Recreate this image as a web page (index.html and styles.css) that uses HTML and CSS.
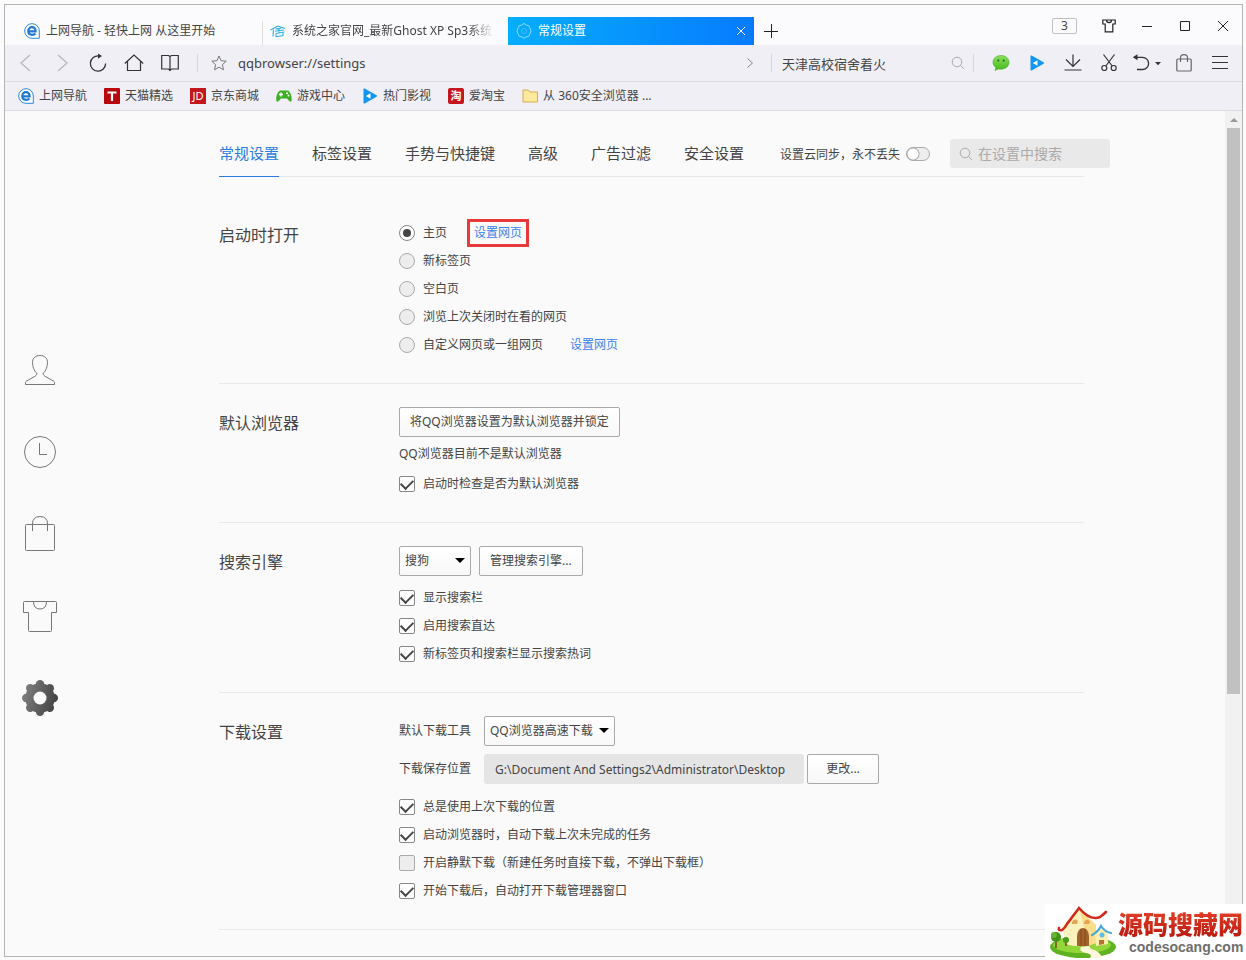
FILE: index.html
```html
<!DOCTYPE html>
<html lang="zh-CN">
<head>
<meta charset="utf-8">
<title>常规设置</title>
<link rel="stylesheet" href="styles.css">
</head>
<body>
<svg class="defs" width="0" height="0" aria-hidden="true">
  <defs>
    <linearGradient id="gearFill" gradientUnits="userSpaceOnUse" x1="0" y1="12" x2="36" y2="24"><stop offset="0" stop-color="#808080"/><stop offset="1" stop-color="#404040"/></linearGradient>
    <linearGradient id="chatFill" x1="0" y1="0" x2="0" y2="1"><stop offset="0" stop-color="#8be05e"/><stop offset="1" stop-color="#43b91c"/></linearGradient>
    <symbol id="i-e" viewBox="0 0 16 16"><path d="M15.300 15.300H8A7.300 7.300 0 1 1 15.300 8Z" fill="#fff" stroke="#2b86de" stroke-width="1"/><path d="M4.400 8.300H11.600C11.700 5.700 10.100 4.200 8 4.200S4.300 5.900 4.300 8.100 5.900 11.900 8.200 11.900C9.600 11.900 10.600 11.500 11.400 10.600" fill="none" stroke="#1f78d4" stroke-width="2.200"/></symbol>
    <symbol id="i-play" viewBox="0 0 16 16"><path d="M1.500 1.200Q1.500 0 2.700 .6L14.600 7.200Q15.700 8 14.600 8.800L2.700 15.400Q1.500 16 1.500 14.800Z" fill="#1296f5"/><path d="M8.500 5.200V10.800L3.800 8Z" fill="#fff"/></symbol>
    <symbol id="i-search" viewBox="0 0 14 14"><circle cx="6" cy="6" r="4.800" fill="none" stroke="currentColor"/><path d="M9.500 9.500L13 13" stroke="currentColor"/></symbol>
  </defs>
</svg>
<div class="window">
  <header class="titlebar">
    <div class="tabs">
      <div class="tab"><svg class="ico" viewBox="0 0 16 16"><use href="#i-e"/></svg><span class="tab-text">上网导航 - 轻快上网 从这里开始</span></div>
      <div class="tab tab-divided"><svg class="ico" viewBox="0 0 16 16" fill="none" stroke="#2fb0ea" stroke-width="1.100"><path d="M.5 7L8 3L15 5.500M3.500 6.500L3 13.500M5 8.200L14 7M5.500 6L11.500 5M6 10.500L14.500 9M9 5V10M6 13.800L13 12.500V10M6 10.500V13.800"/></svg><span class="tab-text tab-fade">系统之家官网_最新Ghost XP Sp3系统</span></div>
      <div class="tab tab-active"><svg class="ico" viewBox="0 0 16 16" fill="none" stroke="#8fdcff"><path d="M8 .7Q9.300 .7 10.200 2.200Q13.300 1.700 13.600 4.500Q16.600 8 13.600 11.500Q13.300 14.300 10.200 13.800Q8 16.600 5.800 13.800Q2.700 14.300 2.400 11.500Q-.6 8 2.400 4.500Q2.700 1.700 5.800 2.200Q6.700 .7 8 .7Z"/><circle cx="8" cy="8" r="2.600" stroke="#48b8ff"/></svg><span class="tab-text">常规设置</span><button class="tab-close" aria-label="关闭标签"><svg width="10" height="10" viewBox="0 0 10 10" stroke="#fff"><path d="M1 1L9 9M9 1L1 9"/></svg></button></div>
      <button class="tab-new" aria-label="新标签"><svg width="14" height="14" viewBox="0 0 14 14" stroke="#222"><path d="M0 7.500H14M7.500 0V14"/></svg></button>
    </div>
    <div class="controls">
      <button class="count">3</button>
      <button class="ctl" aria-label="皮肤"><svg width="14" height="14" viewBox="0 0 14 14" fill="none" stroke="#222" stroke-width="1.200"><path d="M.8 1H13.200V5H10.800V12.800H3.200V5H.8ZM4.500 1Q4.500 3.600 7 3.600T9.500 1"/></svg></button>
      <button class="ctl" aria-label="最小化"><svg width="12" height="12" viewBox="0 0 12 12" stroke="#222"><path d="M1 6.500H11"/></svg></button>
      <button class="ctl" aria-label="最大化"><svg width="12" height="12" viewBox="0 0 12 12" fill="none" stroke="#222"><path d="M1.500 1.500H10.500V10.500H1.500Z"/></svg></button>
      <button class="ctl" aria-label="关闭"><svg width="12" height="12" viewBox="0 0 12 12" stroke="#222"><path d="M1 1L11 11M11 1L1 11"/></svg></button>
    </div>
  </header>

  <div class="toolbar">
    <button class="tool" aria-label="后退"><svg width="18" height="18" viewBox="0 0 18 18" fill="none" stroke="#b5b5bb" stroke-width="1.200"><path d="M13 1L4 9L13 17"/></svg></button>
    <button class="tool" aria-label="前进"><svg width="18" height="18" viewBox="0 0 18 18" fill="none" stroke="#b5b5bb" stroke-width="1.200"><path d="M5 1L14 9L5 17"/></svg></button>
    <button class="tool" aria-label="刷新"><svg width="18" height="18" viewBox="0 0 18 18" fill="none" stroke="#333" stroke-width="1.300"><path d="M10 2A7.600 7.600 0 1 0 16.600 9.500"/><path d="M9 -.5L13 2L9 4.700Z" fill="#333" stroke="none"/></svg></button>
    <button class="tool" aria-label="主页"><svg width="20" height="18" viewBox="0 0 20 18" fill="none" stroke="#333" stroke-width="1.200"><path d="M.8 9.500L10 1L19.200 9.500M3.500 7.200V16.500H16.500V7.200"/></svg></button>
    <button class="tool" aria-label="阅读"><svg width="18" height="18" viewBox="0 0 18 18" fill="none" stroke="#333" stroke-width="1.200"><path d="M.7 1.500H7.500L9 2.500L10.500 1.500H17.300V15H10.500L9 16.500L7.500 15H.7ZM9 2.500V16.500"/></svg></button>
    <div class="address">
      <svg width="16" height="16" viewBox="0 0 16 16" fill="none" stroke="#777"><path d="M8 1L10.100 5.700L15.200 6.200L11.400 9.700L12.500 14.800L8 12.200L3.500 14.800L4.600 9.700L.8 6.200L5.900 5.700Z"/></svg>
      <input class="url" aria-label="地址" value="qqbrowser://settings">
      <svg width="8" height="12" viewBox="0 0 8 12" fill="none" stroke="#888"><path d="M1.500 1.500L6.500 6L1.500 10.500"/></svg>
    </div>
    <div class="quick">
      <input class="quick-input" aria-label="搜索" value="天津高校宿舍着火">
      <svg class="grey" width="14" height="14"><use href="#i-search"/></svg>
    </div>
    <div class="tools">
      <button class="tool" aria-label="微信"><svg width="18" height="18" viewBox="0 0 18 18"><path d="M9 1.500C4.300 1.500 1 4.500 1 8.300C1 10.600 2.200 12.500 4 13.700L3 16.500L6.500 14.900Q7.700 15.200 9 15.200C13.700 15.200 17 12.200 17 8.300S13.700 1.500 9 1.500Z" fill="url(#chatFill)" stroke="#4aa82a" stroke-width=".6"/><circle cx="6.300" cy="6.500" r="1" fill="#245e12"/><circle cx="11.700" cy="6.500" r="1" fill="#245e12"/></svg></button>
      <button class="tool" aria-label="视频"><svg width="16" height="16"><use href="#i-play"/></svg></button>
      <button class="tool" aria-label="下载"><svg width="18" height="18" viewBox="0 0 18 18" fill="none" stroke="#333" stroke-width="1.200"><path d="M9 .5V12M2 5.500L9 12.500L16 5.500M.5 16H17.500"/></svg></button>
      <button class="tool" aria-label="截图"><svg width="18" height="18" viewBox="0 0 18 18" fill="none" stroke="#333" stroke-width="1.200"><path d="M3.500 .5L12.200 12M14.500 .5L5.800 12"/><circle cx="4.300" cy="14" r="2.500"/><circle cx="13.700" cy="14" r="2.500"/></svg></button>
      <button class="tool tool-wide" aria-label="恢复"><svg width="28" height="18" viewBox="0 0 28 18" fill="none" stroke="#333" stroke-width="1.300"><path d="M1 3.300H9.500A6 6 0 0 1 9.500 15.500H4"/><path d="M-.2 3.300L4.500 .2V6.200Z" fill="#333" stroke="none"/><path d="M22 8H28L25 11.200Z" fill="#333" stroke="none"/></svg></button>
      <button class="tool" aria-label="应用"><svg width="16" height="18" viewBox="0 0 16 18" fill="none" stroke="#666" stroke-width="1.200"><rect x=".8" y="5" width="14.400" height="12" rx="1"/><path d="M4.500 8V4A3.500 3.300 0 0 1 11.500 4V8"/></svg></button>
      <button class="tool" aria-label="菜单"><svg width="16" height="14" viewBox="0 0 16 14" stroke="#333"><path d="M0 .5H16M0 6.500H16M0 12.500H16"/></svg></button>
    </div>
  </div>

  <nav class="bookmarks">
    <a href="#"><svg class="ico"><use href="#i-e"/></svg>上网导航</a>
    <a href="#"><svg class="ico" viewBox="0 0 16 16"><rect width="16" height="16" rx="1" fill="#b8070d"/><path d="M3.500 4.500H12.500M8 4.500V13" stroke="#fff" stroke-width="2.200"/></svg>天猫精选</a>
    <a href="#"><span class="ico badge">JD</span>京东商城</a>
    <a href="#"><svg class="ico" viewBox="0 0 16 16"><path d="M4 2.500H12C15 4.500 16 9 15.700 12.500Q14.800 15.300 12.300 12L11 10.500H5L3.700 12Q1.200 15.300 .3 12.500C0 9 1 4.500 4 2.500Z" fill="#3fae29"/><path d="M3 6.500H7M5 4.500V8.500" stroke="#fff" stroke-width="1.400"/><circle cx="11" cy="5.300" r="1" fill="#fff"/><circle cx="12.500" cy="7.500" r="1" fill="#fff"/></svg>游戏中心</a>
    <a href="#"><svg class="ico"><use href="#i-play"/></svg>热门影视</a>
    <a href="#"><span class="ico badge badge-tao">淘</span>爱淘宝</a>
    <a href="#"><svg class="ico" viewBox="0 0 16 16"><path d="M1 14V2H6.500L8 4H15.500V14Z" fill="#fde99a" stroke="#d3ad4f"/></svg>从 360安全浏览器 ...</a>
  </nav>

  <div class="page">
    <nav class="side">
      <a href="#" aria-label="账号"><svg width="36" height="36" viewBox="0 0 36 36"><path d="M15 21.500C12 19 10.500 14.500 10.500 10.500C10.500 6 13.700 3.500 18 3.500S25.500 6 25.500 10.500C25.500 14.500 24 19 21 21.500Q21 23 23 24.300L31.500 29Q32.500 29.600 32.500 30.500V32.500H3.500V30.500Q3.500 29.600 4.500 29L13 24.300Q15 23 15 21.500Z"/></svg></a>
      <a href="#" aria-label="历史"><svg width="36" height="36" viewBox="0 0 36 36"><circle cx="18" cy="18" r="15.500"/><path d="M17.500 9V20.500H25"/></svg></a>
      <a href="#" aria-label="应用"><svg width="36" height="36" viewBox="0 0 36 36"><rect x="3.500" y="8.500" width="29" height="26" rx="1"/><path d="M10.500 15V8Q10.500 .5 18 .5T25.500 8V15"/></svg></a>
      <a href="#" aria-label="皮肤"><svg width="36" height="36" viewBox="0 0 36 36"><path d="M2.500 3.500H33.500Q34.500 3.500 34.500 4.500V14.500H29.500V32.500Q29.500 33.500 28.500 33.500H7.500Q6.500 33.500 6.500 32.500V14.500H1.500V4.500Q1.500 3.500 2.500 3.500ZM11.500 3.500Q11.500 11 18 11T24.500 3.500"/></svg></a>
      <a href="#" aria-label="设置"><svg width="36" height="36" viewBox="0 0 36 36"><g class="gear"><circle cx="18" cy="18" r="14.800"/><circle cx="18" cy="4.200" r="4.200"/><circle cx="27.800" cy="8.200" r="4.200"/><circle cx="31.800" cy="18" r="4.200"/><circle cx="27.800" cy="27.800" r="4.200"/><circle cx="18" cy="31.800" r="4.200"/><circle cx="8.200" cy="27.800" r="4.200"/><circle cx="4.200" cy="18" r="4.200"/><circle cx="8.200" cy="8.200" r="4.200"/></g><circle class="hole" cx="18" cy="18" r="6.500"/></svg></a>
    </nav>

    <main class="main">
      <div class="settings">
        <div class="topnav">
          <a class="on" href="#">常规设置</a><a href="#">标签设置</a><a href="#">手势与快捷键</a><a href="#">高级</a><a href="#">广告过滤</a><a href="#">安全设置</a>
          <label class="sync">设置云同步，永不丢失<input class="switch" type="checkbox"></label>
          <div class="find"><svg class="grey" width="14" height="14"><use href="#i-search"/></svg><input type="text" placeholder="在设置中搜索" aria-label="在设置中搜索"></div>
        </div>

        <section class="group group-first">
          <h2>启动时打开</h2>
          <div>
            <div class="row"><label><input type="radio" name="start" checked>主页</label><a class="link marked" href="#">设置网页</a></div>
            <div class="row"><label><input type="radio" name="start">新标签页</label></div>
            <div class="row"><label><input type="radio" name="start">空白页</label></div>
            <div class="row"><label><input type="radio" name="start">浏览上次关闭时在看的网页</label></div>
            <div class="row"><label><input type="radio" name="start">自定义网页或一组网页</label><a class="link" href="#">设置网页</a></div>
          </div>
        </section>

        <section class="group">
          <h2>默认浏览器</h2>
          <div>
            <button class="btn">将QQ浏览器设置为默认浏览器并锁定</button>
            <p class="note">QQ浏览器目前不是默认浏览器</p>
            <div class="row"><label><input type="checkbox" checked>启动时检查是否为默认浏览器</label></div>
          </div>
        </section>

        <section class="group">
          <h2>搜索引擎</h2>
          <div>
            <div class="line"><span class="select"><select aria-label="搜索引擎"><option>搜狗</option></select></span><button class="btn">管理搜索引擎...</button></div>
            <div class="checks">
              <div class="row"><label><input type="checkbox" checked>显示搜索栏</label></div>
              <div class="row"><label><input type="checkbox" checked>启用搜索直达</label></div>
              <div class="row"><label><input type="checkbox" checked>新标签页和搜索栏显示搜索热词</label></div>
            </div>
          </div>
        </section>

        <section class="group">
          <h2>下载设置</h2>
          <div>
            <div class="fields">
              <label for="tool">默认下载工具</label>
              <span class="select select-wide"><select id="tool"><option>QQ浏览器高速下载</option></select></span>
              <label for="path">下载保存位置</label>
              <div class="path"><input id="path" type="text" readonly value="G:\Document And Settings2\Administrator\Desktop"><button class="btn">更改...</button></div>
            </div>
            <div class="checks">
              <div class="row"><label><input type="checkbox" checked>总是使用上次下载的位置</label></div>
              <div class="row"><label><input type="checkbox" checked>启动浏览器时，自动下载上次未完成的任务</label></div>
              <div class="row"><label><input type="checkbox">开启静默下载（新建任务时直接下载，不弹出下载框）</label></div>
              <div class="row"><label><input type="checkbox" checked>开始下载后，自动打开下载管理器窗口</label></div>
            </div>
          </div>
        </section>
      </div>
    </main>
    <div class="scroll"><div class="scroll-up"></div><div class="scroll-thumb"></div></div>
  </div>
</div>

<div class="brand">
  <svg width="70" height="54" viewBox="0 0 70 54">
    <ellipse cx="35" cy="42" rx="33" ry="11" fill="#5fb321"/>
    <ellipse cx="34" cy="40" rx="29" ry="8" fill="#92d63a"/>
    <path d="M14 21L32 4L48 20V38Q32 44 18 39Z" fill="#fdf1bd"/>
    <path d="M32 5L48 20V38L40 41Z" fill="#f7dd8c"/>
    <path d="M11 23Q10 26 14 25Q17 23 19 19L31 3Q42 16 52 12Q56 9 58 7" fill="none" stroke="#cf2a1c" stroke-width="2.600" stroke-linecap="round"/>
    <path d="M29 41V31Q30 23 35 23T41 31V41Z" fill="#a2622b"/><path d="M33 24V41M37 24V41" stroke="#7c431a" stroke-width=".8"/>
    <path d="M24 17Q27 12 30 16L29 19H24ZM36 17Q40 12 42 17L41 19H36Z" fill="#e3a552"/>
    <path d="M47 29L53 22L60 29V39L48 41Z" fill="#ffeeb2"/>
    <path d="M44 30Q50 27 53 21Q57 27 63 28" fill="none" stroke="#48a9d6" stroke-width="2.200" stroke-linecap="round"/>
    <circle cx="54" cy="30" r="2.500" fill="#5dbce5"/><path d="M51 40V35H56V39Z" fill="#b57232"/>
    <path d="M8 43V35M18 41V35" stroke="#7c4b20" stroke-width="1.600"/>
    <circle cx="8" cy="32" r="5" fill="#3f9418"/><circle cx="6" cy="30" r="3" fill="#63b62b"/><circle cx="18" cy="35" r="3" fill="#479d1b"/>
    <path d="M33 42Q30 46 38 48Q45 49 42 53H54Q52 46 43 44L41 41Z" fill="#fff8dc"/>
  </svg>
  <div class="brand-text"><strong>源码搜藏网</strong><span>codesocang.com</span></div>
</div>
</body>
</html>
```
FILE: styles.css
```css
* { box-sizing: border-box; }
body {
  margin: 0;
  height: 100vh;
  padding: 4px 3px 3px 4px;
  background: #fbfbfb;
  color: #444;
  font: 12px/16px "Noto Sans", "Noto Sans CJK SC", sans-serif;
  overflow: hidden;
}
button, input, select { font: inherit; color: inherit; }
button { padding: 0; border: 0; background: none; }
a { color: inherit; text-decoration: none; }
svg { display: block; flex: none; overflow: visible; }
.defs { position: absolute; }
.ico { width: 16px; height: 16px; flex: none; }
.grey { color: #aaa; }

.window {
  display: flex;
  flex-direction: column;
  height: 100%;
  border: 1px solid #b4b4b4;
  background: #fafafa;
}

/* title bar */
.titlebar { display: flex; justify-content: space-between; height: 40px; background: #fbfafd; }
.tabs { display: flex; align-items: flex-end; flex: 1; min-width: 0; padding-left: 11px; }
.tab { display: flex; align-items: center; gap: 6px; flex: 0 1 246px; min-width: 0; height: 28px; padding: 0 8px; }
.tab-divided { background: linear-gradient(#ddd, #ddd) left bottom / 1px 24px no-repeat; }
.tab-text { flex: 1; min-width: 0; overflow: hidden; white-space: nowrap; }
.tab-fade { margin-right: 6px; mask-image: linear-gradient(90deg, #000 88%, transparent); }
.tab-active { background: linear-gradient(90deg, #06aefb, #067bff); color: #fff; }
.tab-new { align-self: flex-end; height: 28px; padding: 0 10px; }
.controls { display: flex; align-items: center; padding-top: 2px; }
.count { width: 25px; height: 16px; margin-right: 13px; border: 1px solid #c2c2c2; border-radius: 2px; line-height: 14px; }
.ctl { display: grid; place-items: center; width: 38px; height: 36px; }

/* toolbar */
.toolbar { display: flex; align-items: center; height: 37px; padding: 0 4px 0 3px; background: #f0eff5; border-bottom: 1px solid #dcdce0; }
.tool { display: grid; place-items: center; flex: none; width: 36px; height: 34px; }
.tool-wide { width: 39px; }
.address, .quick { display: flex; align-items: center; height: 18px; border-left: 1px solid #d6d6da; }
.address { flex: 1; min-width: 0; margin-left: 9px; padding: 0 17px 0 13px; }
.address input, .quick input { flex: 1; min-width: 0; height: 24px; padding: 0; border: 0; background: none; outline: 0; }
.url { margin-left: 11px; font-size: 13px; }
.quick { width: 203px; padding: 0 8px 0 10px; border-right: 1px solid #d6d6da; font-size: 13px; }
.tools { display: flex; margin-left: 9px; }

.bookmarks { display: flex; align-items: center; gap: 17px; height: 29px; padding: 0 13px; background: #f0eff5; border-bottom: 1px solid #dcdce0; white-space: nowrap; }
.bookmarks a { display: flex; align-items: center; gap: 5px; }
.badge { background: #c4161f; color: #fff; font-size: 11px; line-height: 16px; text-align: center; }
.badge-tao { border-radius: 2px; font-weight: bold; }

/* page */
.page { display: flex; flex: 1; min-height: 0; overflow: hidden; }
.side { display: flex; flex-direction: column; justify-content: center; align-items: center; gap: 46px; flex: none; width: 70px; fill: none; stroke: #777; }
.gear { fill: url(#gearFill); stroke: none; }
.hole { fill: #fafafa; stroke: none; }
.main { flex: 1; min-width: 0; padding: 0 141px 0 144px; overflow: hidden; }
.settings { max-width: 1100px; }

.topnav { display: flex; align-items: stretch; gap: 33px; height: 66px; padding-top: 20px; border-bottom: 1px solid #e6e6e6; font-size: 15px; line-height: 45px; white-space: nowrap; }
.topnav a { height: 46px; }
.topnav .on { color: #2a7de1; border-bottom: 1px solid #2a7de1; }
.sync { display: flex; align-items: center; gap: 6px; height: 46px; margin-left: 3px; font-size: 12px; }
.switch { appearance: none; width: 24px; height: 14px; margin: 0; border: 1px solid #aaa; border-radius: 7px; background: radial-gradient(circle at 6px 6px, #fff 5px, #aaa 6px, #eee 7px); }
.find { display: flex; align-items: center; gap: 5px; flex: none; width: 160px; height: 29px; margin: 8px -26px 0 -13px; padding: 0 9px; border-radius: 3px; background: #e9e9e9; font-size: 14px; line-height: 20px; }
.find input { flex: 1; min-width: 0; height: 24px; padding: 0; border: 0; background: none; outline: 0; }
.find input::placeholder { color: #aaa; opacity: 1; }

.group { display: grid; grid-template-columns: 180px 1fr; padding: 23px 0 24px; border-bottom: 1px solid #e9e9e9; }
.group-first { padding-top: 42px; }
h2 { margin: 0; font-size: 16px; font-weight: normal; line-height: 32px; }
.row { display: flex; align-items: center; height: 28px; white-space: nowrap; }
.row label { display: flex; align-items: center; gap: 8px; }
.link { margin-left: 27px; color: #3b82f0; }
.marked { margin-left: 20px; padding: 3px 4px; border: 3px solid #e83a3a; }
.note { margin: 0; line-height: 33px; }
.checks { margin-top: 8px; }
.fields + .checks { margin-top: 9px; }
.line { display: flex; gap: 8px; }

.row input { appearance: none; display: grid; place-items: center; width: 16px; height: 16px; margin: 0; border: 1px solid #aaa; background: #ededed; }
.row input[type="radio"] { border-radius: 50%; }
.row input[type="checkbox"] { border-radius: 2px; }
.row input:checked { border-color: #888; background: #fdfdfd; }
.row input[type="radio"]:checked::before { content: ""; width: 8px; height: 8px; border-radius: 50%; background: #444; }
.row input[type="checkbox"]:checked::before { content: ""; width: 10px; height: 6px; margin-bottom: 3px; border: solid #444; border-width: 0 0 2px 2px; transform: rotate(-45deg); }

.btn, .select select { height: 30px; border: 1px solid #a9a9a9; border-radius: 2px; background: linear-gradient(#fff, #f8f8f8); }
.btn { display: block; padding: 0 10px; }
.select { position: relative; display: block; width: 72px; }
.select-wide { width: 131px; }
.select select { appearance: none; display: block; width: 100%; padding: 0 5px; outline: 0; }
.select::after { content: ""; position: absolute; top: 12px; right: 6px; border: 5px solid transparent; border-top-color: #000; border-bottom: 0; pointer-events: none; }
.fields { display: grid; grid-template-columns: 85px 1fr; gap: 8px 0; align-items: center; }
.path { display: flex; gap: 3px; }
.path input { width: 320px; min-width: 0; height: 30px; padding: 0 11px; border: 0; border-radius: 3px; background: #e5e5e5; outline: 0; }
.path .btn { width: 72px; }

.scroll { display: flex; flex-direction: column; align-items: center; flex: none; width: 17px; background: #f1f1f1; }
.scroll-up { flex: none; margin: 7px 0 6px; border: 4px solid transparent; border-bottom-color: #999; border-top: 0; }
.scroll-thumb { width: 13px; height: 67%; background: #c1c1c1; }

/* site mark over the corner of the window */
.brand { position: absolute; right: 0; bottom: 0; display: flex; align-items: center; width: 201px; height: 56px; padding-left: 3px; background: #fff; white-space: nowrap; }
.brand-text strong { display: block; font: 900 25px/30px "Noto Sans CJK SC", sans-serif; color: transparent; background: linear-gradient(#e8442c, #b8190f); background-clip: text; }
.brand-text span { display: block; padding-left: 11px; font: bold 14px/18px "Liberation Sans", sans-serif; color: #6e6e6e; }
```
